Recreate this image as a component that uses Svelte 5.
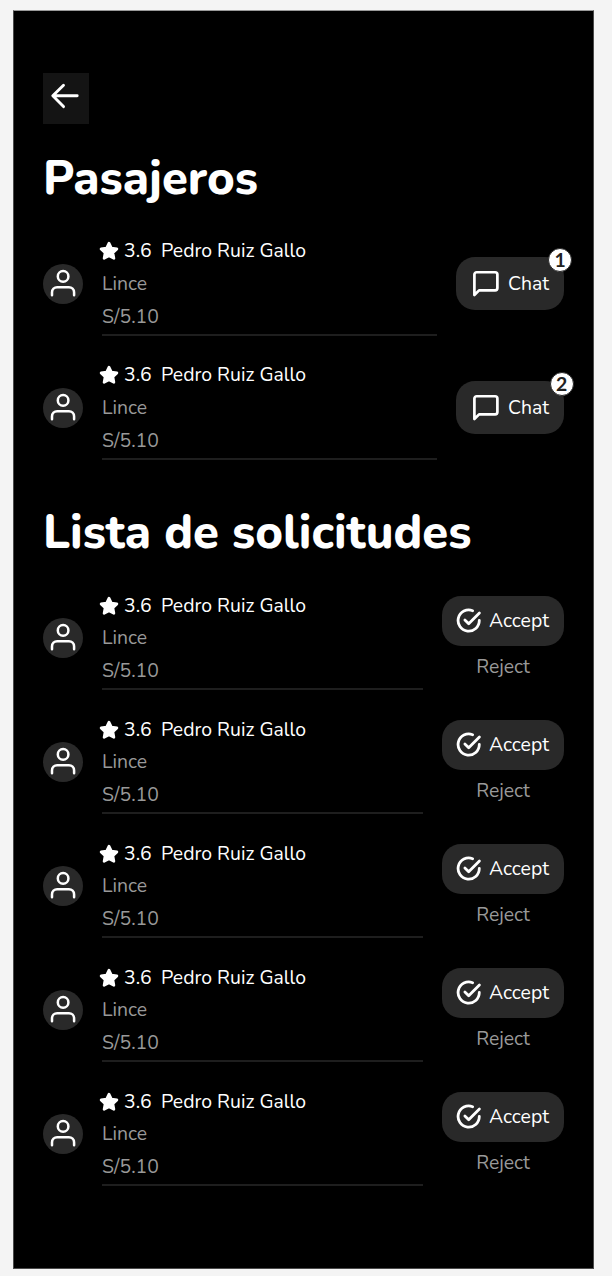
<script>
  const passengers = [
    { name: 'Pedro Ruiz Gallo', rating: '3.6', place: 'Lince', price: 'S/5.10', unread: 1 },
    { name: 'Pedro Ruiz Gallo', rating: '3.6', place: 'Lince', price: 'S/5.10', unread: 2 }
  ];
  const requests = Array.from({ length: 5 }, () => ({
    name: 'Pedro Ruiz Gallo', rating: '3.6', place: 'Lince', price: 'S/5.10'
  }));
</script>

{#snippet person(p)}
  <div class="avatar">
    <svg width="31" height="31" viewBox="0 0 24 24" fill="none" stroke="#fff" stroke-width="1.95" stroke-linecap="round" stroke-linejoin="round">
      <path d="M20.2 21v-2.1a4 4 0 0 0-4-4H7.1a4 4 0 0 0-4 4V21" />
      <circle cx="11.7" cy="6.5" r="4.1" />
    </svg>
  </div>
  <div class="info">
    <div class="line top">
      <svg class="star" width="20" height="20" viewBox="0 0 20 20" fill="#fff" stroke="#fff" stroke-width="2.7" stroke-linejoin="round">
        <path d="M10 2.1l2.4 5 5.5.8-4 3.8 1 5.6-4.9-2.6-4.9 2.6 1-5.6-4-3.8 5.5-.8z" />
      </svg>
      <span class="rating">{p.rating}</span>
      <span class="name">{p.name}</span>
    </div>
    <div class="line place">{p.place}</div>
    <div class="line price">{p.price}</div>
  </div>
{/snippet}

<main class="screen">
  <button class="back" aria-label="Volver">
    <svg width="30" height="30" viewBox="0 0 30 30" fill="none" stroke="#fff" stroke-width="2.9" stroke-linecap="round" stroke-linejoin="round">
      <path d="M27.2 14.8H3.2M13.5 4.2L2.8 14.8l10.7 10.8" />
    </svg>
  </button>

  <h1 class="first">Pasajeros</h1>
  <section>
    {#each passengers as p}
      <article class="row">
        {@render person(p)}
        <div class="actions">
          <button class="pill chat">
            <svg width="31" height="31" viewBox="0 0 24 24" fill="none" stroke="#fff" stroke-width="2.1" stroke-linecap="round" stroke-linejoin="round">
              <path d="M21.2 15.5a1.8 1.8 0 0 1-1.8 1.8H7l-3.6 3.6V5.1a1.8 1.8 0 0 1 1.8-1.8h14.2a1.8 1.8 0 0 1 1.8 1.8z" />
            </svg>
            <span class="chat-label">Chat</span>
            <span class="badge" class:shift={p.unread === 2}>{p.unread}</span>
          </button>
        </div>
      </article>
    {/each}
  </section>

  <h1 class="second">Lista de solicitudes</h1>
  <section>
    {#each requests as p}
      <article class="row">
        {@render person(p)}
        <div class="actions">
          <button class="pill accept">
            <svg width="26" height="26" viewBox="0 0 26 26" fill="none" stroke="#fff" stroke-width="2.8" stroke-linecap="round" stroke-linejoin="round">
              <path d="M16.6 2.7A10.6 10.6 0 1 0 23.3 12.5" />
              <path d="M8.9 11.9l3.8 3.8L23.4 4.9" />
            </svg>
            <span class="accept-label">Accept</span>
          </button>
          <button class="reject"><span>Reject</span></button>
        </div>
      </article>
    {/each}
  </section>
</main>

<style>
  :global(body) { background: #f4f4f4; }
  .screen {
    box-sizing: border-box;
    width: 581px;
    height: 1259px;
    margin: 10px 0 7px 13px;
    padding: 62px 29px 0;
    border: 1px solid #4b4b4b;
    border-top-color: #999;
    background: #000;
    color: #fff;
    font: 19.4px/32.4px Nunito, Lato, sans-serif;
    overflow: hidden;
  }
  button { border: 0; padding: 0; margin: 0; color: inherit; font: inherit; }
  svg { display: block; flex: none; }
  .back {
    box-sizing: border-box;
    width: 46px;
    height: 51px;
    padding: 8px 0 0 7px;
    display: flex;
    align-items: flex-start;
    background: #141414;
  }
  h1 {
    margin: 0;
    font-size: 47.2px;
    line-height: 60px;
    font-weight: 800;
    white-space: nowrap;
  }
  .first { margin-top: 25px; margin-bottom: 25.6px; }
  .second { margin-top: 43.4px; margin-bottom: 26px; }
  section { display: flex; flex-direction: column; gap: 23px; }
  .row { display: flex; height: 101px; }
  .avatar {
    width: 40px;
    height: 40px;
    margin: 29px 19px 0 0;
    border-radius: 50%;
    background: #292929;
    display: flex;
    align-items: center;
    justify-content: center;
    flex: none;
  }
  .info {
    flex: 1;
    box-sizing: border-box;
    height: 101px;
    padding-top: 0.6px;
    border-bottom: 2px solid #1e1e1e;
  }
  .line { height: 32.4px; white-space: nowrap; color: #999; }
  .top { display: flex; align-items: center; color: #fff; }
  .price { padding-top: 0.6px; height: 32px; }
  .star { margin: 0 5px 0 -3px; }
  .rating { width: 37px; }
  .actions { display: flex; flex-direction: column; align-items: center; margin-left: 19px; flex: none; }
  .pill {
    position: relative;
    display: flex;
    align-items: center;
    border-radius: 19px;
    background: #292929;
  }
  .chat { width: 108px; height: 53px; margin-top: 22.8px; padding-left: 13.5px; gap: 7.5px; }
  .badge {
    position: absolute;
    top: -9.8px;
    right: -8px;
    box-sizing: border-box;
    width: 24px;
    height: 24px;
    border: 1px solid #292929;
    border-radius: 50%;
    background: #fff;
    color: #222;
    font: 700 19.4px/22px Lato, sans-serif;
    text-align: center;
  }
  .shift { right: -9.5px; }
  .accept { width: 122px; height: 50px; margin-top: 7px; padding-left: 14px; gap: 7px; }
  .reject { background: none; color: #999; margin-top: 5.4px; height: 32px; }
</style>
